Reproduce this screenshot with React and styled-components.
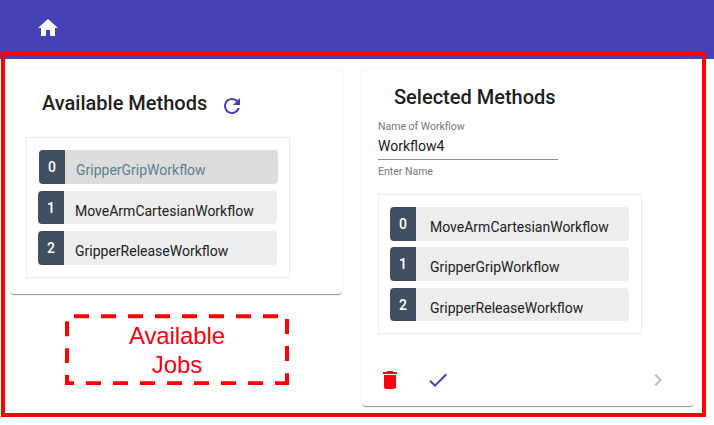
import React from "react";
import styled, { createGlobalStyle } from "styled-components";

const GlobalStyle = createGlobalStyle`
  * { box-sizing: border-box; }
  body { margin: 0; background: #fff; overflow: hidden; font-family: Roboto, sans-serif; color: #212121; }
`;

const Page = styled.div`
  position: relative;
  width: 714px;
  height: 425px;
`;

const Toolbar = styled.header`
  display: flex;
  height: 59px;
  padding: 16px 36px;
  background: #4641b7;
  color: #fff;
`;

const Icon = styled.svg.attrs({ viewBox: "0 0 24 24", width: 24, height: 24 })`
  display: block;
  flex: none;
  fill: ${(p) => p.$color || "currentColor"};
`;

const Columns = styled.main`
  display: flex;
  align-items: flex-start;
  gap: 20px;
  padding: 10px;
`;

const Column = styled.section`
  width: 332px;
`;

const Card = styled.div`
  display: flex;
  flex-direction: column;
  height: ${(p) => p.$height}px;
  padding: 0 16px;
  border-radius: 4px;
  background: #fff;
  box-shadow: 0 2px 1px -1px rgba(0, 0, 0, 0.3), 0 1px 1px 0 rgba(0, 0, 0, 0.16),
    0 0 2px 0 rgba(0, 0, 0, 0.12);
`;

const CardHeader = styled.div`
  display: flex;
  flex: none;
  gap: 13px;
  height: ${(p) => p.$height}px;
  padding: ${(p) => p.$top}px 16px 0;
`;

const Title = styled.h2`
  margin: 0;
  font-size: 20px;
  font-weight: 500;
  line-height: 24px;
  white-space: nowrap;
`;

const RefreshButton = styled.button`
  height: 24px;
  margin-top: 3px;
  padding: 0;
  border: 0;
  background: none;
`;

const Field = styled.label`
  display: flex;
  flex: none;
  flex-direction: column;
  width: 180px;
  height: 74px;
`;

const Hint = styled.span`
  flex: none;
  font-size: 10.5px;
  line-height: 14px;
  color: #777;
`;

const Input = styled.input`
  flex: none;
  width: 180px;
  height: 26px;
  margin-bottom: 5px;
  padding: 0 0 2px;
  border: 0;
  border-bottom: 1px solid #8b8b8b;
  outline: 0;
  background: none;
  color: #212121;
  font: 400 14px/20px Roboto, sans-serif;
`;

const List = styled.ul`
  display: flex;
  flex: none;
  flex-direction: column;
  gap: ${(p) => p.$gap}px;
  width: 264px;
  height: ${(p) => p.$height}px;
  margin: 0;
  padding: 12px 12px 0 11px;
  border: 1px solid #ececec;
  list-style: none;
`;

const Row = styled.li`
  display: flex;
  width: 239px;
  height: 33.5px;
  margin-left: ${(p) => (p.$active ? 1 : 0)}px;
  border-radius: 4px;
  overflow: hidden;
  background: ${(p) => (p.$active ? "#dcdcdc" : "#ededed")};
  color: ${(p) => (p.$active ? "#607d8b" : "#212121")};
`;

const Badge = styled.span`
  width: 26px;
  height: 100%;
  background: #405061;
  color: #fff;
  font-size: 14px;
  font-weight: 500;
  line-height: 34px;
  text-align: center;
`;

const RowName = styled.span`
  padding: 10px 0 0 ${(p) => p.$indent}px;
  font-size: 14px;
  line-height: 20px;
  white-space: nowrap;
`;

const Actions = styled.footer`
  display: flex;
  gap: 24px;
  margin-top: 34px;
`;

const Action = styled.button`
  width: 24px;
  height: 24px;
  padding: 0;
  border: 0;
  background: none;
  margin-left: ${(p) => (p.$end ? "auto" : 0)};
  margin-right: ${(p) => (p.$end ? 8 : 0)}px;
`;

const Callout = styled.div`
  position: relative;
  width: 224px;
  height: 71px;
  margin: 20px 0 0 55px;
  padding: 7px 0 0;
  color: #fa0010;
  font: 400 24px/29px "Liberation Sans", Arial, sans-serif;
  letter-spacing: -0.1px;
  text-align: center;
`;

const Dashes = styled.svg`
  position: absolute;
  inset: 0;
  fill: none;
  stroke: #ff0000;
  stroke-width: 4;
`;

const Outline = styled.div`
  position: absolute;
  left: 1px;
  top: 52px;
  width: 705px;
  height: 365px;
  border: 4px solid #ff0000;
  pointer-events: none;
`;

function MethodList({ names, active, indent, height, gap = 7 }) {
  return (
    <List $height={height} $gap={gap}>
      {names.map((name, i) => (
        <Row key={name} $active={i === active}>
          <Badge>{i}</Badge>
          <RowName $indent={indent}>{name}</RowName>
        </Row>
      ))}
    </List>
  );
}

export default function App() {
  return (
    <Page>
      <GlobalStyle />
      <Toolbar>
        <Icon>
          <path d="M10 20v-6h4v6h5v-8h3L12 3 2 12h3v8z" />
        </Icon>
      </Toolbar>
      <Columns>
        <Column>
          <Card $height={225}>
            <CardHeader $height={68} $top={22}>
              <Title>Available Methods</Title>
              <RefreshButton aria-label="Refresh">
                <Icon $color="#4641b7">
                  <path d="M17.65 6.35C16.2 4.9 14.21 4 12 4c-4.42 0-7.99 3.58-7.99 8s3.57 8 7.99 8c3.73 0 6.84-2.55 7.73-6h-2.08c-.82 2.33-3.04 4-5.65 4-3.31 0-6-2.69-6-6s2.69-6 6-6c1.66 0 3.14.69 4.22 1.78L13 11h7V4l-2.35 2.35z" />
                </Icon>
              </RefreshButton>
            </CardHeader>
            <MethodList
              names={["GripperGripWorkflow", "MoveArmCartesianWorkflow", "GripperReleaseWorkflow"]}
              active={0}
              indent={11}
              height={141}
            />
          </Card>
          <Callout>
            <Dashes width="224" height="71">
              <path d="M9 2.3H213" strokeDasharray="15 12" />
              <path d="M2 7.3V49M222 5V48" strokeDasharray="15 12" />
              <path d="M2 61V69.3H9M210 69.3H222V59.3" />
              <path d="M21 69.3H198" strokeDasharray="15 12" />
            </Dashes>
            Available
            <br />
            Jobs
          </Callout>
        </Column>
        <Column>
          <Card $height={337}>
            <CardHeader $height={51} $top={16}>
              <Title>Selected Methods</Title>
            </CardHeader>
            <Field>
              <Hint>Name of Workflow</Hint>
              <Input defaultValue="Workflow4" />
              <Hint>Enter Name</Hint>
            </Field>
            <MethodList
              names={["MoveArmCartesianWorkflow", "GripperGripWorkflow", "GripperReleaseWorkflow"]}
              indent={14}
              height={140}
              gap={6.85}
            />
            <Actions>
              <Action aria-label="Delete">
                <Icon $color="#ff0012">
                  <path d="M6 19c0 1.1.9 2 2 2h8c1.1 0 2-.9 2-2V7H6v12zM19 4h-3.5l-1-1h-5l-1 1H5v2h14V4z" />
                </Icon>
              </Action>
              <Action aria-label="Confirm">
                <Icon $color="#4641b7">
                  <path d="M9 16.17L4.83 12l-1.42 1.41L9 19 21 7l-1.41-1.41z" />
                </Icon>
              </Action>
              <Action aria-label="Next" $end>
                <Icon $color="#bdbdbd">
                  <path d="M10 6L8.59 7.41 13.17 12l-4.58 4.59L10 18l6-6z" />
                </Icon>
              </Action>
            </Actions>
          </Card>
        </Column>
      </Columns>
      <Outline />
    </Page>
  );
}
